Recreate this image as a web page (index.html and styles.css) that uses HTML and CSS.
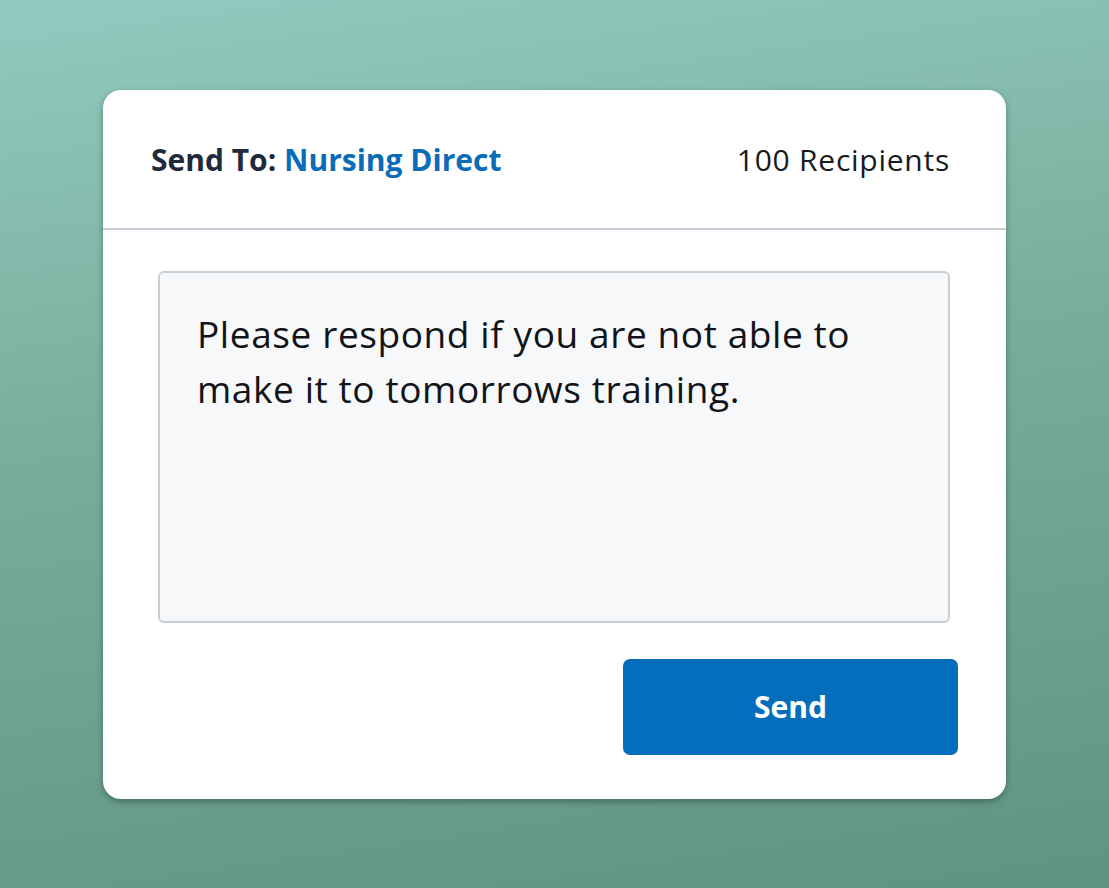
FILE: index.html
```html
<!DOCTYPE html>
<html lang="en">
<head>
<meta charset="utf-8">
<title>Send Message</title>
<link rel="stylesheet" href="styles.css">
</head>
<body>
  <main class="stage">
    <section class="card">
      <header class="card-header">
        <div class="send-to"><span class="label">Send To:</span> <span class="group">Nursing Direct</span></div>
        <div class="recipients">100 Recipients</div>
      </header>
      <div class="card-body">
        <div class="message">Please respond if you are not able to make it to tomorrows training.</div>
        <div class="actions">
          <button class="send-btn" type="button">Send</button>
        </div>
      </div>
    </section>
  </main>
</body>
</html>
```

FILE: styles.css
```css
* { box-sizing: border-box; }
html, body { margin: 0; padding: 0; height: 100%; }
body {
  font-family: "Open Sans", "Noto Sans", sans-serif;
  background: linear-gradient(172deg, #91cabf 0%, #78ad9a 45%, #609480 100%);
}
.stage {
  height: 888px;
  display: flex;
  align-items: center;
  justify-content: center;
}
.card {
  width: 903px;
  height: 709px;
  background: #ffffff;
  border-radius: 18px;
  box-shadow: 0 3px 6px rgba(30, 60, 50, 0.45);
  display: flex;
  flex-direction: column;
}
.card-header {
  height: 140px;
  display: flex;
  align-items: center;
  justify-content: space-between;
  padding: 2px 56px 0 48px;
  border-bottom: 2px solid #c9cdd5;
}
.send-to {
  font-size: 30px;
  font-weight: 700;
  color: #1f2a3c;
}
.group { color: #0a6cb8; }
.recipients {
  font-size: 30px;
  letter-spacing: 0.75px;
  color: #161a22;
}
.card-body {
  padding: 41px 48px 44px 55px;
  display: flex;
  flex-direction: column;
}
.message {
  width: 792px;
  height: 352px;
  background: #f7f8fa;
  border: 2px solid #c9cdd5;
  border-radius: 6px;
  padding: 33px 37px;
  font-size: 37px;
  letter-spacing: 0.6px;
  line-height: 55px;
  color: #111418;
}
.actions {
  display: flex;
  justify-content: flex-end;
  margin-top: 36px;
}
.send-btn {
  width: 335px;
  height: 96px;
  border: 0;
  border-radius: 7px;
  background: #046ebd;
  color: #ffffff;
  font-family: inherit;
  font-size: 30px;
  font-weight: 700;
  padding: 0;
}
```
